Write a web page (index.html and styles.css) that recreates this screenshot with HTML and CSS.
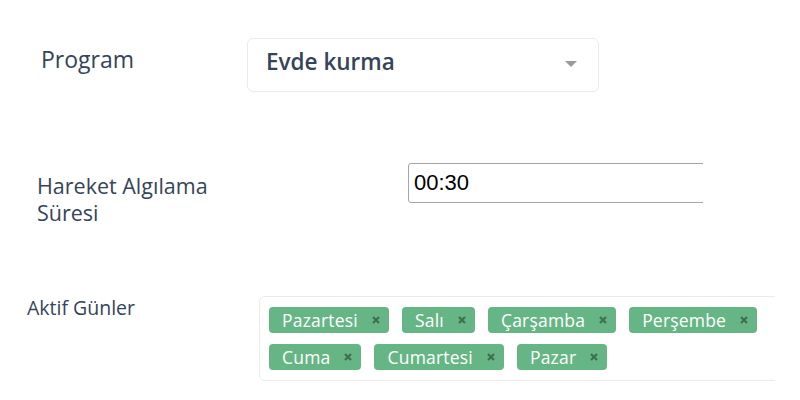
FILE: index.html
```html
<!DOCTYPE html>
<html lang="tr">
<head>
<meta charset="utf-8">
<link rel="stylesheet" href="styles.css">
</head>
<body>
<div class="form">
  <div class="row row-program">
    <div class="label label-program">Program</div>
    <div class="select">
      <span class="select-value">Evde kurma</span>
      <span class="caret"></span>
    </div>
  </div>
  <div class="row row-time">
    <div class="label label-time">Hareket Algılama Süresi</div>
    <div class="clip clip-time">
      <div class="time-input">00:30</div>
    </div>
  </div>
  <div class="row row-days">
    <div class="label label-days">Aktif Günler</div>
    <div class="clip clip-days">
      <div class="tags">
        <span class="tag">Pazartesi<svg class="x" viewBox="0 0 8 8"><path d="M1 1L7 7M7 1L1 7"/></svg></span>
        <span class="tag">Salı<svg class="x" viewBox="0 0 8 8"><path d="M1 1L7 7M7 1L1 7"/></svg></span>
        <span class="tag">Çarşamba<svg class="x" viewBox="0 0 8 8"><path d="M1 1L7 7M7 1L1 7"/></svg></span>
        <span class="tag">Perşembe<svg class="x" viewBox="0 0 8 8"><path d="M1 1L7 7M7 1L1 7"/></svg></span>
        <span class="tag">Cuma<svg class="x" viewBox="0 0 8 8"><path d="M1 1L7 7M7 1L1 7"/></svg></span>
        <span class="tag">Cumartesi<svg class="x" viewBox="0 0 8 8"><path d="M1 1L7 7M7 1L1 7"/></svg></span>
        <span class="tag">Pazar<svg class="x" viewBox="0 0 8 8"><path d="M1 1L7 7M7 1L1 7"/></svg></span>
      </div>
    </div>
  </div>
</div>
</body>
</html>
```
FILE: styles.css
```css
html, body {
  margin: 0;
  padding: 0;
  background: #ffffff;
}
body {
  width: 800px;
  height: 400px;
  overflow: hidden;
  font-family: "Open Sans", "Noto Sans", sans-serif;
  color: #354458;
}
.row {
  display: flex;
  align-items: flex-start;
}
.row-program {
  padding-top: 38px;
  padding-left: 41px;
}
.label-program {
  width: 206px;
  padding-top: 6px;
  font-size: 23px;
  line-height: 30px;
}
.select {
  width: 352px;
  height: 54px;
  box-sizing: border-box;
  border: 1px solid #ebebeb;
  border-radius: 6px;
  display: flex;
  align-items: center;
  justify-content: space-between;
  padding: 0 21px 7px 18px;
}
.select-value {
  font-size: 22.5px;
  font-weight: 600;
  color: #354458;
}
.caret {
  width: 0;
  height: 0;
  margin-top: 5px;
  border-left: 6px solid transparent;
  border-right: 6px solid transparent;
  border-top: 6px solid #9a9a9a;
}
.row-time {
  padding-top: 71px;
  padding-left: 37px;
}
.label-time {
  width: 200px;
  margin-right: 171px;
  padding-top: 9px;
  font-size: 21.5px;
  line-height: 27px;
}
.clip {
  overflow: hidden;
}
.clip-time {
  width: 295px;
}
.time-input {
  width: 340px;
  height: 40px;
  box-sizing: border-box;
  border: 1px solid #a5a5a5;
  border-radius: 3px;
  font-family: "Liberation Sans", Arial, sans-serif;
  font-size: 22px;
  line-height: 38px;
  color: #000;
  padding-left: 5px;
}
.row-days {
  padding-top: 70px;
  padding-left: 27px;
}
.label-days {
  width: 232px;
  font-size: 19.5px;
  line-height: 24px;
}
.clip-days {
  width: 516px;
}
.tags {
  width: 560px;
  box-sizing: border-box;
  border: 1px solid #ebebeb;
  border-radius: 6px;
  padding: 10px 9px;
  display: flex;
  flex-wrap: wrap;
  gap: 11px 13px;
}
.tag {
  display: inline-flex;
  align-items: center;
  height: 26px;
  background: #66b685;
  color: #ffffff;
  border-radius: 4px;
  font-size: 17.5px;
  letter-spacing: 0.2px;
  padding: 0 9px 0 13px;
}
.x {
  width: 8px;
  height: 8px;
  margin-left: 14px;
  stroke: #3f6e52;
  stroke-width: 2.2;
  fill: none;
}
```
